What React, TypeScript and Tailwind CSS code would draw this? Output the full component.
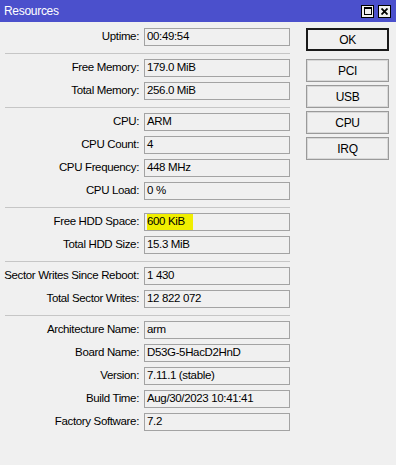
// Winbox-style "Resources" window
type Row = { label: string; value: string; mark?: boolean }

const groups: Row[][] = [
  [{ label: 'Uptime:', value: '00:49:54' }],
  [
    { label: 'Free Memory:', value: '179.0 MiB' },
    { label: 'Total Memory:', value: '256.0 MiB' },
  ],
  [
    { label: 'CPU:', value: 'ARM' },
    { label: 'CPU Count:', value: '4' },
    { label: 'CPU Frequency:', value: '448 MHz' },
    { label: 'CPU Load:', value: '0 %' },
  ],
  [
    { label: 'Free HDD Space:', value: '600 KiB', mark: true },
    { label: 'Total HDD Size:', value: '15.3 MiB' },
  ],
  [
    { label: 'Sector Writes Since Reboot:', value: '1 430' },
    { label: 'Total Sector Writes:', value: '12 822 072' },
  ],
  [
    { label: 'Architecture Name:', value: 'arm' },
    { label: 'Board Name:', value: 'D53G-5HacD2HnD' },
    { label: 'Version:', value: '7.11.1 (stable)' },
    { label: 'Build Time:', value: 'Aug/30/2023 10:41:41' },
    { label: 'Factory Software:', value: '7.2' },
  ],
]

const buttons = ['PCI', 'USB', 'CPU', 'IRQ']

export default function App() {
  return (
    <div
      className="flex h-[465px] w-[396px] flex-col bg-[#f0f0f0] text-[11.5px] leading-none tracking-[-0.35px] text-black"
      style={{ fontFamily: '"Liberation Sans", Arial, sans-serif' }}
    >
      <div className="flex h-[22px] items-center justify-between bg-[#4b50cc] pl-[4px] pr-[5px]">
        <span className="text-[12px] tracking-[-0.3px] text-white">Resources</span>
        <div className="flex gap-[4px]">
          <div className="flex h-[13px] w-[13px] items-center justify-center border border-black bg-[#f0f0f0]">
            <div className="h-[8px] w-[8px] border border-black border-t-2" />
          </div>
          <div className="flex h-[13px] w-[13px] items-center justify-center border border-black bg-[#f0f0f0]">
            <svg width="7" height="7" viewBox="0 0 7 7">
              <path d="M0.5 0.5 L6.5 6.5 M6.5 0.5 L0.5 6.5" stroke="black" strokeWidth="1.8" />
            </svg>
          </div>
        </div>
      </div>

      <div className="flex">
        <div className="flex w-[290px] flex-col gap-[5px] pl-[5px] pt-[6px]">
          {groups.map((g, gi) => (
            <div key={gi} className="contents">
              {gi > 0 && <div className="mt-[2px] h-px bg-[#c6c6c6]" />}
              {g.map((r) => (
                <div key={r.label} className="flex items-center gap-[5px]">
                  <div className="flex w-[134px] justify-end whitespace-nowrap">{r.label}</div>
                  <div className="flex h-[18px] w-[146px] items-center border border-[#a3a3a3] pl-[2px]">
                    <span className={r.mark ? 'bg-[#f0ee00] py-[2px] pr-[8px]' : ''}>{r.value}</span>
                  </div>
                </div>
              ))}
            </div>
          ))}
        </div>

        <div className="ml-[16px] flex flex-col gap-[3px] pt-[6px]">
          <button className="mb-[5px] h-[23px] w-[83px] border-2 border-[#1a1a1a] bg-[#f0f0f0] text-[12px]">
            OK
          </button>
          {buttons.map((b) => (
            <button
              key={b}
              className="h-[23px] w-[83px] border border-[#9a9a9a] bg-[#f0f0f0] text-[12px] shadow-[inset_0_0_0_1px_#d8d8d8]"
            >
              {b}
            </button>
          ))}
        </div>
      </div>
    </div>
  )
}
